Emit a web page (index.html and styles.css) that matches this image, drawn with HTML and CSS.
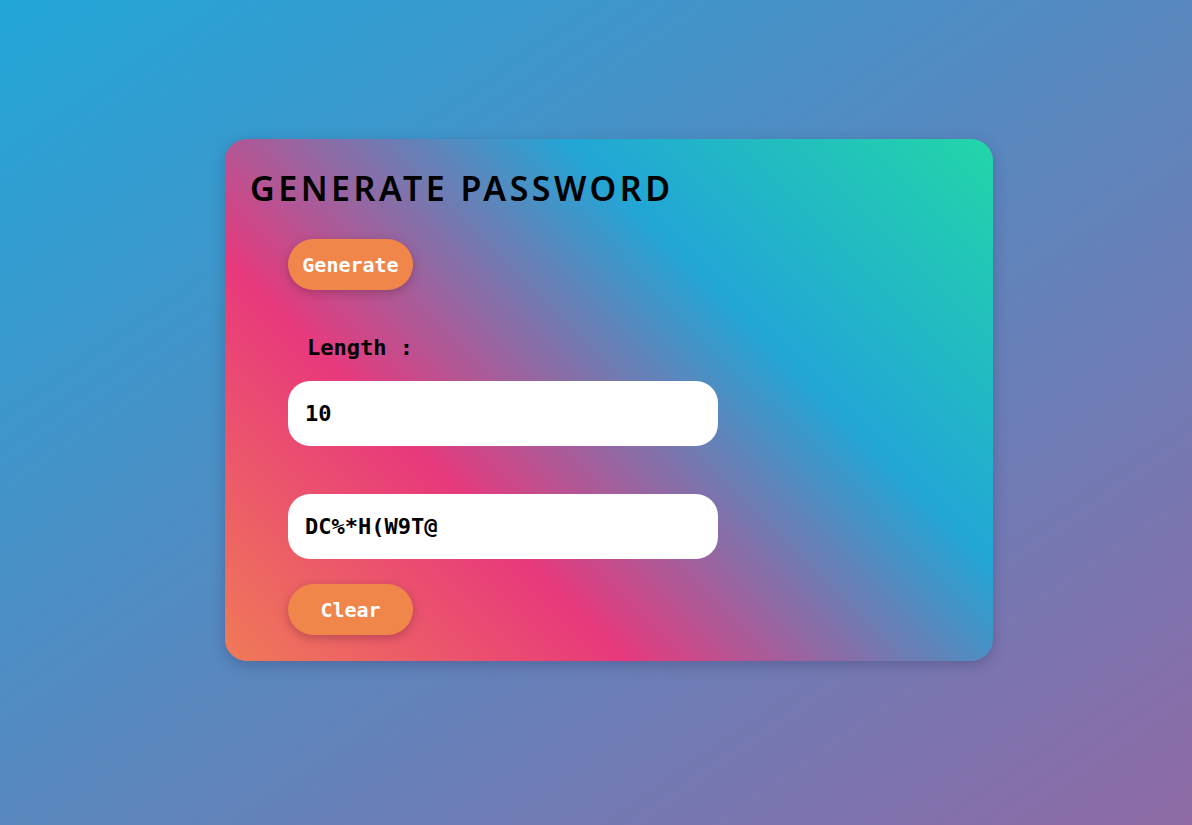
FILE: index.html
```html
<!DOCTYPE html>
<html lang="en">
<head>
<meta charset="utf-8">
<title>Generate Password</title>
<link rel="stylesheet" href="styles.css">
</head>
<body>
  <div class="card">
    <h1 class="title">GENERATE PASSWORD</h1>
    <div class="content">
      <button class="btn btn-generate">Generate</button>
      <label class="label" for="len">Length :</label>
      <input class="field" id="len" type="text" value="10">
      <input class="field field-out" type="text" value="DC%*H(W9T@">
      <button class="btn btn-clear">Clear</button>
    </div>
  </div>
</body>
</html>
```
FILE: styles.css
```css
* { box-sizing: border-box; }
html, body { height: 100%; }
body {
  margin: 0;
  background: linear-gradient(to bottom right, #22a6d8, #8f6aa6);
  font-family: "DejaVu Sans Mono", monospace;
  overflow: hidden;
}
.card {
  margin: 139px 0 0 225px;
  width: 768px;
  height: 522px;
  border-radius: 22px;
  padding: 25px 0 25px 25px;
  background: linear-gradient(45deg, #f07a57 0%, #e8397c 31%, #22a6d6 67%, #22d6a8 100%);
  box-shadow: 0 4px 14px rgba(40, 40, 90, 0.3);
}
.title {
  margin: 0;
  font-family: "Noto Sans", sans-serif;
  font-weight: 600;
  font-size: 34px;
  line-height: 48px;
  letter-spacing: 3.5px;
  color: #000;
}
.content {
  display: flex;
  flex-direction: column;
  align-items: flex-start;
  padding-left: 38px;
}
.btn {
  width: 125px;
  height: 51px;
  border: none;
  border-radius: 26px;
  background: #f0864a;
  color: #fff;
  font-family: "DejaVu Sans Mono", monospace;
  font-weight: bold;
  font-size: 20px;
  box-shadow: 0 3px 10px rgba(90, 30, 50, 0.35);
  padding: 0;
}
.btn-generate { margin-top: 27px; }
.label {
  margin-top: 45px;
  padding-left: 19px;
  font-weight: bold;
  font-size: 22px;
  line-height: 26px;
  color: #000;
}
.field {
  margin-top: 20px;
  width: 430px;
  height: 65px;
  border: none;
  border-radius: 22px;
  background: #fff;
  padding: 0 17px;
  font-family: "DejaVu Sans Mono", monospace;
  font-weight: bold;
  font-size: 22px;
  color: #000;
  outline: none;
}
.field-out { margin-top: 48px; }
.btn-clear { margin-top: 25px; }
```
